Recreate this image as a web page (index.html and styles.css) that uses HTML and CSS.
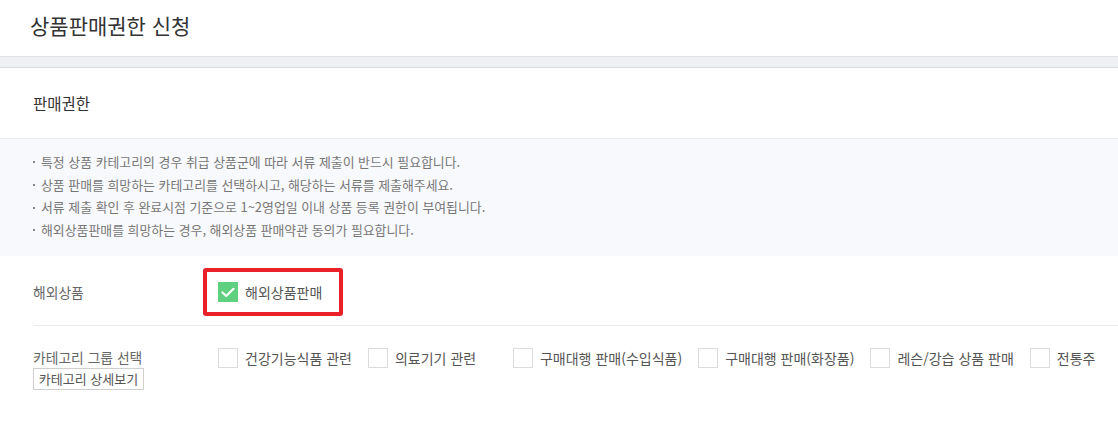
FILE: index.html
```html
<!DOCTYPE html>
<html lang="ko">
<head>
<meta charset="utf-8">
<title>상품판매권한 신청</title>
<link rel="stylesheet" href="styles.css">
</head>
<body>
<header class="page-header">
  <h1 class="page-title">상품판매권한 신청</h1>
</header>
<div class="band"></div>
<section class="panel">
  <div class="panel-head">
    <h2 class="panel-title">판매권한</h2>
  </div>
  <ul class="notice">
    <li>특정 상품 카테고리의 경우 취급 상품군에 따라 서류 제출이 반드시 필요합니다.</li>
    <li>상품 판매를 희망하는 카테고리를 선택하시고, 해당하는 서류를 제출해주세요.</li>
    <li>서류 제출 확인 후 완료시점 기준으로 1~2영업일 이내 상품 등록 권한이 부여됩니다.</li>
    <li>해외상품판매를 희망하는 경우, 해외상품 판매약관 동의가 필요합니다.</li>
  </ul>
  <div class="form">
    <div class="row row-overseas">
      <div class="row-label">해외상품</div>
      <div class="row-body">
        <label class="highlight">
          <span class="check checked">
            <svg width="14" height="11" viewBox="0 0 14 11"><path d="M1.5 5.5 L5.2 9 L12.5 1.8" fill="none" stroke="#fff" stroke-width="2.2" stroke-linecap="round" stroke-linejoin="round"/></svg>
          </span>
          <span class="check-text">해외상품판매</span>
        </label>
      </div>
    </div>
    <div class="row row-category">
      <div class="row-label">
        <div>카테고리 그룹 선택</div>
        <button class="btn">카테고리 상세보기</button>
      </div>
      <div class="row-body options">
        <label class="opt"><span class="check"></span><span class="check-text">건강기능식품 관련</span></label>
        <label class="opt"><span class="check"></span><span class="check-text">의료기기 관련</span></label>
        <label class="opt"><span class="check"></span><span class="check-text">구매대행 판매(수입식품)</span></label>
        <label class="opt"><span class="check"></span><span class="check-text">구매대행 판매(화장품)</span></label>
        <label class="opt"><span class="check"></span><span class="check-text">레슨/강습 상품 판매</span></label>
        <label class="opt"><span class="check"></span><span class="check-text">전통주</span></label>
      </div>
    </div>
  </div>
</section>
</body>
</html>
```

FILE: styles.css
```css
* { box-sizing: border-box; }
html, body {
  margin: 0;
  padding: 0;
  background: #fff;
  font-family: "Noto Sans CJK KR", "Noto Sans", sans-serif;
  color: #333;
  overflow: hidden;
}
.page-header {
  height: 57px;
  border-bottom: 1px solid #e1e3e7;
  display: flex;
  align-items: center;
  padding-left: 30px;
}
.page-title {
  margin: 0;
  font-size: 21px;
  font-weight: 400;
  line-height: 26px;
  color: #333;
  position: relative;
  top: -3px;
}
.band {
  height: 11px;
  background: #eef0f4;
  border-bottom: 1px solid #d8dadf;
}
.panel { background: #fff; }
.panel-head {
  height: 71px;
  border-bottom: 1px solid #e8eaee;
  display: flex;
  align-items: center;
  padding-left: 33px;
}
.panel-title {
  margin: 0;
  font-size: 15.5px;
  font-weight: 400;
  color: #333;
  line-height: 20px;
}
.notice {
  margin: 0;
  list-style: none;
  background: #f8f9fc;
  padding: 12px 0 14px 33px;
}
.notice li {
  font-size: 12.9px;
  line-height: 22.7px;
  color: #777;
  display: flex;
  align-items: center;
  white-space: nowrap;
}
.notice li::before {
  content: "";
  width: 2px;
  height: 2px;
  background: #888;
  margin-right: 6px;
  flex: none;
}
.form { padding-left: 33px; }
.row {
  display: flex;
}
.row-label {
  width: 185px;
  flex: none;
  font-size: 13.8px;
  color: #666;
  line-height: 18px;
  white-space: nowrap;
}
.row-overseas {
  height: 70px;
  align-items: center;
  padding-top: 4px;
  border-bottom: 1px solid #ebebeb;
}
.row-body { display: flex; }
.highlight {
  display: flex;
  align-items: center;
  width: 140px;
  height: 48px;
  border: 4px solid #e8212b;
  border-radius: 3px;
  padding-left: 11px;
  margin-left: -15px;
}
.check {
  width: 20px;
  height: 20px;
  border: 1px solid #dcdcdc;
  background: #fff;
  flex: none;
  display: flex;
  align-items: center;
  justify-content: center;
}
.check.checked {
  background: #5fcf80;
  border-color: #5fcf80;
}
.check-text {
  margin-left: 7px;
  font-size: 14px;
  color: #555;
  line-height: 18px;
  white-space: nowrap;
}
.row-category {
  padding-top: 22px;
}
.row-category .row-label { padding-top: 0; }
.btn {
  display: block;
  margin-top: 2px;
  font-family: inherit;
  font-size: 13px;
  color: #555;
  background: #fff;
  border: 1px solid #cfcfcf;
  border-radius: 0;
  height: 22px;
  width: 111px;
  padding: 0;
  line-height: 20px;
}
.options { flex-wrap: nowrap; }
.opt {
  display: flex;
  align-items: center;
  min-width: 129px;
  margin-right: 16px;
  height: 20px;
}
.opt:last-child { margin-right: 0; }
```
